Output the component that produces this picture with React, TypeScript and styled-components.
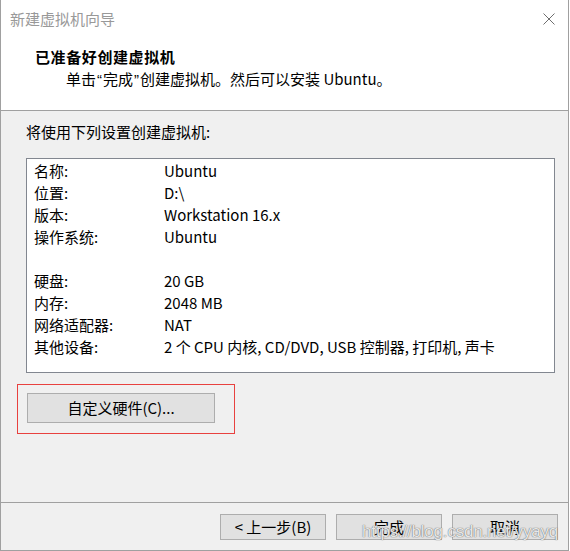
import React from "react";
import styled, { createGlobalStyle } from "styled-components";

const Global = createGlobalStyle`
  html, body { margin: 0; padding: 0; background: #ffffff; }
  body { width: 570px; height: 551px; overflow: hidden; }
`;

const FONT = `"Segoe UI", "Noto Sans CJK SC", "Noto Sans", sans-serif`;

const Window = styled.div`
  position: relative;
  box-sizing: border-box;
  width: 569px;
  height: 551px;
  display: flex;
  flex-direction: column;
  border-left: 1px solid #a0a0a0;
  border-right: 1px solid #a0a0a0;
  border-bottom: 1px solid #a0a0a0;
  background: #f0f0f0;
  font-family: ${FONT};
  font-size: 15px;
  color: #000;
`;

const TitleBar = styled.div`
  height: 38px;
  flex: none;
  display: flex;
  align-items: center;
  justify-content: space-between;
  padding: 0 13px 0 9px;
  background: #fff;
  color: #999999;
  line-height: 22px;
`;

const CloseIcon = styled.svg`
  width: 12px;
  height: 12px;
  display: block;
`;

const Header = styled.div`
  flex: none;
  background: #fff;
  padding: 8px 0 19px 34px;
  border-bottom: 1px solid #a0a0a0;
  line-height: 22px;
`;

const Heading = styled.div`
  font-weight: bold;
  letter-spacing: 0.6px;
`;

const SubText = styled.div`
  padding-left: 31px;
`;

const Quote = styled.span`
  font-family: "Liberation Sans", Arial, sans-serif;
  padding: 0 1px;
`;

const Body = styled.div`
  flex: 1;
  padding: 10px 13px 0 25px;
  line-height: 22px;
`;

const Intro = styled.div`
  margin-bottom: 15px;
`;

const SummaryBox = styled.div`
  background: #fff;
  border: 1px solid #828790;
  padding: 1px 7px 14px 7px;
`;

const Row = styled.div`
  display: grid;
  grid-template-columns: 130px 1fr;
  height: 22px;
  white-space: nowrap;
`;

const Spacer = styled.div`
  height: 22px;
`;

const HighlightFrame = styled.div`
  display: inline-flex;
  margin: 11px 0 0 -9px;
  padding: 8px 19px 10px 9px;
  border: 1px solid #e8413f;
`;

const PushButton = styled.button<{ $w: number; $h: number }>`
  box-sizing: border-box;
  width: ${(p) => p.$w}px;
  height: ${(p) => p.$h}px;
  padding: 0;
  margin: 0;
  background: #e1e1e1;
  border: 1px solid #adadad;
  font-family: ${FONT};
  font-size: 15px;
  color: #000;
  line-height: 22px;
  display: flex;
  align-items: center;
  justify-content: center;
`;

const Footer = styled.div`
  flex: none;
  border-top: 1px solid #a0a0a0;
  padding: 11px 10px 10px 0;
  display: flex;
  justify-content: flex-end;
  gap: 10px;
`;

const Watermark = styled.div`
  position: absolute;
  right: 10px;
  bottom: 8px;
  font-family: "Liberation Sans", Arial, sans-serif;
  font-size: 17px;
  line-height: 20px;
  letter-spacing: -0.2px;
  color: rgba(255, 255, 255, 0.85);
  text-shadow: 0 0 1px rgba(80, 80, 80, 0.8), 0 0 1px rgba(80, 80, 80, 0.6);
  pointer-events: none;
`;

const rows1: [string, string][] = [
  ["名称:", "Ubuntu"],
  ["位置:", "D:\\"],
  ["版本:", "Workstation 16.x"],
  ["操作系统:", "Ubuntu"],
];

const rows2: [string, string][] = [
  ["硬盘:", "20 GB"],
  ["内存:", "2048 MB"],
  ["网络适配器:", "NAT"],
  ["其他设备:", "2 个 CPU 内核, CD/DVD, USB 控制器, 打印机, 声卡"],
];

export default function App() {
  return (
    <>
      <Global />
      <Window>
        <TitleBar>
          <span>新建虚拟机向导</span>
          <CloseIcon viewBox="0 0 12 12">
            <path d="M0.5 0.5 L11.5 11.5 M11.5 0.5 L0.5 11.5" stroke="#6e6e6e" strokeWidth="1" fill="none" />
          </CloseIcon>
        </TitleBar>
        <Header>
          <Heading>已准备好创建虚拟机</Heading>
          <SubText>
            单击<Quote>“</Quote>完成<Quote>”</Quote>创建虚拟机。然后可以安装 Ubuntu。
          </SubText>
        </Header>
        <Body>
          <Intro>将使用下列设置创建虚拟机:</Intro>
          <SummaryBox>
            {rows1.map(([k, v]) => (
              <Row key={k}>
                <span>{k}</span>
                <span>{v}</span>
              </Row>
            ))}
            <Spacer />
            {rows2.map(([k, v]) => (
              <Row key={k}>
                <span>{k}</span>
                <span>{v}</span>
              </Row>
            ))}
          </SummaryBox>
          <HighlightFrame>
            <PushButton $w={188} $h={30}>自定义硬件(C)...</PushButton>
          </HighlightFrame>
        </Body>
        <Footer>
          <PushButton $w={106} $h={26}>&lt; 上一步(B)</PushButton>
          <PushButton $w={106} $h={26}>完成</PushButton>
          <PushButton $w={106} $h={26}>取消</PushButton>
        </Footer>
        <Watermark>https://blog.csdn.net/yyayq</Watermark>
      </Window>
    </>
  );
}
